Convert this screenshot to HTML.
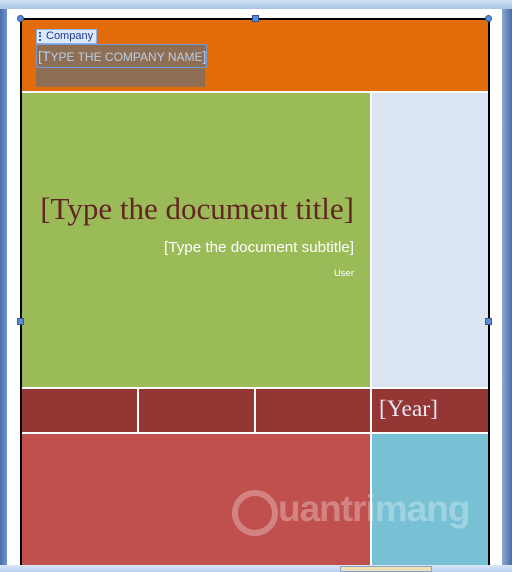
<!DOCTYPE html>
<html><head><style>
*{margin:0;padding:0;box-sizing:border-box}
body{width:512px;height:572px;overflow:hidden;background:#fff;position:relative;font-family:"Liberation Sans",sans-serif}
.a{position:absolute}
</style></head><body>
<div class="a" style="left:0;top:0;width:512px;height:9px;background:linear-gradient(#cfe0f2,#a9c4e6)"></div>
<div class="a" style="left:0;top:9px;width:7px;height:563px;background:linear-gradient(90deg,#4a6ea8,#6f93c9)"></div>
<div class="a" style="left:502px;top:9px;width:10px;height:563px;background:linear-gradient(90deg,#8ea9d1,#4b6da6)"></div>
<div class="a" style="left:7px;top:9px;width:495px;height:556px;background:#fff"></div>
<div class="a" style="left:20px;top:18px;width:470px;height:550px;border:2px solid #000;border-bottom:none"></div>
<div class="a" style="left:22px;top:20px;width:466px;height:71px;background:#e36c0a"></div>
<div class="a" style="left:22px;top:93px;width:348px;height:294px;background:#9bbb59"></div>
<div class="a" style="left:372px;top:93px;width:116px;height:294px;background:#dbe5f1"></div>
<div class="a" style="left:22px;top:389px;width:115px;height:43px;background:#943634"></div>
<div class="a" style="left:139px;top:389px;width:115px;height:43px;background:#943634"></div>
<div class="a" style="left:256px;top:389px;width:114px;height:43px;background:#943634"></div>
<div class="a" style="left:372px;top:389px;width:116px;height:43px;background:#943634"></div>
<div class="a" style="left:22px;top:434px;width:348px;height:131px;background:#c0504d"></div>
<div class="a" style="left:372px;top:434px;width:116px;height:131px;background:#78c0d4"></div>
<!-- watermark -->
<div class="a" style="left:22px;top:434px;width:466px;height:131px;overflow:hidden">
<div class="a" style="left:210px;top:56px;width:46px;height:46px;border-radius:50%;border:6px solid rgba(255,255,255,.3)"></div>
<div class="a" style="left:256px;top:54px;font-size:37px;font-weight:bold;color:rgba(255,255,255,.3);letter-spacing:-1px;white-space:nowrap">uantrimang</div>
</div>
<div class="a" style="left:0;top:565px;width:512px;height:7px;background:linear-gradient(#dbe7f6,#b9cfee)"></div>
<div class="a" style="left:340px;top:566px;width:92px;height:6px;background:#f0e1b5;border:1px solid #8aa3c8"></div>
<!-- handles -->
<div class="a" style="left:17px;top:15px;width:7px;height:7px;border-radius:50%;background:#5b8bd3;border:1px solid #2d5aa0"></div>
<div class="a" style="left:485px;top:15px;width:7px;height:7px;border-radius:50%;background:#5b8bd3;border:1px solid #2d5aa0"></div>
<div class="a" style="left:252px;top:15px;width:7px;height:7px;background:#5b8bd3;border:1px solid #2d5aa0"></div>
<div class="a" style="left:17px;top:318px;width:7px;height:7px;background:#5b8bd3;border:1px solid #2d5aa0"></div>
<div class="a" style="left:485px;top:318px;width:7px;height:7px;background:#5b8bd3;border:1px solid #2d5aa0"></div>
<!-- company -->
<div class="a" style="left:36px;top:29px;width:61px;height:15px;background:#dce8fb;border:1px solid #8db0e3;font-size:11px;color:#1f3a8a;line-height:13px;padding-left:9px">Company</div>
<div class="a" style="left:39px;top:32px;width:2px;height:9px;border-left:2px dotted #3060b0"></div>
<div class="a" style="left:36px;top:66px;width:169px;height:21px;background:#8f6f54"></div>
<div class="a" style="left:36px;top:44px;width:171px;height:24px;background:#8f6f54;border:1px solid #6e9be0;border-radius:2px;color:#b8cdea;font-size:14px;line-height:22px;padding-left:1px;white-space:nowrap">[T<span style="font-size:12px">YPE THE COMPANY NAME</span>]</div>
<!-- title -->
<div class="a" style="right:158px;top:191px;font-family:'Liberation Serif',serif;font-size:31px;color:#632523;white-space:nowrap">[Type the document title]</div>
<div class="a" style="right:158px;top:239px;font-size:15.2px;color:#fff;white-space:nowrap">[Type the document subtitle]</div>
<div class="a" style="right:158px;top:268px;font-size:9.5px;color:#fff">User</div>
<div class="a" style="left:379px;top:396px;font-family:'Liberation Serif',serif;font-size:23.5px;color:#e8e8f4">[Year]</div>
</body></html>
